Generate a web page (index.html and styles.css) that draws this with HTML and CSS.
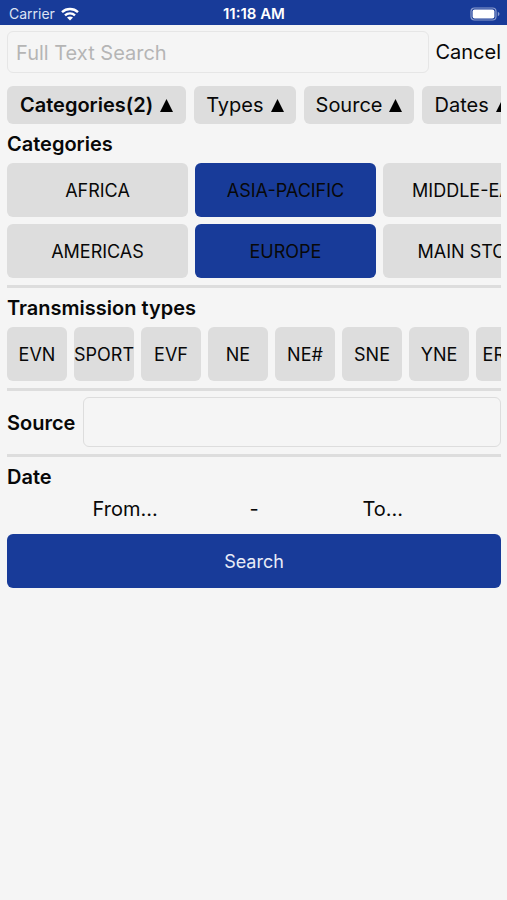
FILE: index.html
```html
<!DOCTYPE html>
<html lang="en">

<head>
    <meta charset="UTF-8">
    <meta name="viewport" content="width=device-width, initial-scale=1.0">
    <title>Search</title>
    <link rel="stylesheet" href="styles.css">
</head>

<body>
    <header class="status-bar">
        <div class="carrier">
            <span>Carrier</span>
            <svg class="wifi" viewBox="0 0 18 14" width="18" height="14">
                <path d="M1 5.2C5.5 1 12.5 1 17 5.2M4 8.3C6.8 5.7 11.2 5.7 14 8.3" fill="none" stroke="#fff" stroke-width="2.4" />
                <path d="M9 13.6L6 10.6C7.7 9.1 10.3 9.1 12 10.6Z" fill="#fff" />
            </svg>
        </div>
        <div class="time">11:18 AM</div>
        <div class="battery">
            <svg viewBox="0 0 31 14" width="31" height="14">
                <rect x="1" y="1" width="25" height="12" rx="3.5" fill="none" stroke="#8c9dcd" stroke-width="1.2" />
                <rect x="2.6" y="2.6" width="21.8" height="8.8" rx="2" fill="#fff" />
                <path d="M27.8 4.8C30 5.6 30 8.4 27.8 9.2Z" fill="#8c9dcd" />
            </svg>
        </div>
    </header>
    <main class="container">
        <form class="search-form">
            <div class="search-row">
                <input type="search" class="text-input" placeholder="Full Text Search" aria-label="Full Text Search">
                <button type="button" class="link-btn">Cancel</button>
            </div>
            <div class="tabs">
                <button type="button" class="tab active">Categories(2) <svg class="arrow" viewBox="0 0 13 13"><path d="M6.5 0L13 13H0Z" /></svg></button>
                <button type="button" class="tab">Types <svg class="arrow" viewBox="0 0 13 13"><path d="M6.5 0L13 13H0Z" /></svg></button>
                <button type="button" class="tab">Source <svg class="arrow" viewBox="0 0 13 13"><path d="M6.5 0L13 13H0Z" /></svg></button>
                <button type="button" class="tab">Dates <svg class="arrow" viewBox="0 0 13 13"><path d="M6.5 0L13 13H0Z" /></svg></button>
            </div>

            <section class="section">
                <h2>Categories</h2>
                <div class="categories">
                    <button type="button" class="chip">AFRICA</button>
                    <button type="button" class="chip selected" aria-pressed="true">ASIA-PACIFIC</button>
                    <button type="button" class="chip">MIDDLE-EAST</button>
                    <button type="button" class="chip">AMERICAS</button>
                    <button type="button" class="chip selected" aria-pressed="true">EUROPE</button>
                    <button type="button" class="chip">MAIN STORY</button>
                </div>
            </section>

            <section class="section">
                <h2>Transmission types</h2>
                <div class="types">
                    <button type="button" class="chip">EVN</button>
                    <button type="button" class="chip">SPORT</button>
                    <button type="button" class="chip">EVF</button>
                    <button type="button" class="chip">NE</button>
                    <button type="button" class="chip">NE#</button>
                    <button type="button" class="chip">SNE</button>
                    <button type="button" class="chip">YNE</button>
                    <button type="button" class="chip">ERNE</button>
                </div>
            </section>

            <section class="section source">
                <label for="source">Source</label>
                <input type="text" id="source" class="text-input">
            </section>

            <section class="date">
                <h2>Date</h2>
                <div class="date-range">
                    <button type="button" class="link-btn">From...</button>
                    <span>-</span>
                    <button type="button" class="link-btn">To...</button>
                </div>
            </section>
            <button type="submit" class="submit">Search</button>
        </form>
    </main>
</body>

</html>
```
FILE: styles.css
```css
* {
    margin: 0;
    padding: 0;
    box-sizing: border-box;
}

body {
    background-color: #f5f5f5;
    color: #080808;
    font-family: Inter, "Liberation Sans", sans-serif;
    font-size: 20px;
    line-height: 24px;
}

button,
input {
    font: inherit;
    color: inherit;
    border: none;
    background: none;
}

button {
    cursor: pointer;
    white-space: nowrap;
}

.status-bar {
    display: grid;
    grid-template-columns: 1fr auto 1fr;
    align-items: center;
    height: 25px;
    padding: 2px 6px 0 7px;
    background-color: #183b99;
    color: #fff;
    font-size: 14px;
}

.carrier {
    display: flex;
    align-items: center;
    gap: 6px;
    padding-left: 2px;
    color: #dde3f3;
}

.time {
    font-size: 15px;
    font-weight: 600;
}

.battery {
    display: flex;
    justify-content: flex-end;
}

.container {
    padding: 6px 6px 0 7px;
}

.search-row {
    display: flex;
    align-items: center;
    gap: 6px;
}

.text-input {
    flex: 1;
    min-width: 0;
    height: 50px;
    padding: 0 8px;
    border: 1px solid #ddd;
    border-radius: 6px;
}

.search-row .text-input {
    height: 42px;
    padding-top: 2px;
    border-color: #e6e6e6;
}

.text-input::placeholder {
    color: #b5b5b5;
}

.tabs,
.categories,
.types {
    overflow-x: auto;
    scrollbar-width: none;
}

.tabs {
    display: flex;
    gap: 8px;
    margin-top: 13px;
}

.tab {
    display: flex;
    flex: none;
    align-items: center;
    gap: 7px;
    height: 38px;
    padding: 0 12px;
    border-radius: 6px;
    background-color: #ddd;
}

.tab.active {
    padding: 0 13px;
    font-weight: 600;
}

.arrow {
    width: 13px;
    height: 13px;
}

.section {
    padding-bottom: 7px;
    border-bottom: 3px solid #ddd;
}

h2,
.source label {
    font-size: 20px;
    font-weight: 600;
}

h2 {
    padding: 8px 0 7px;
}

.categories {
    display: grid;
    grid-template-columns: repeat(3, 181px);
    gap: 7px;
}

.types {
    display: flex;
    gap: 7px;
}

.chip,
.submit {
    height: 54px;
    padding-top: 2px;
    border-radius: 6px;
    background-color: #ddd;
    font-size: 18px;
}

.types .chip {
    flex: none;
    width: 60px;
}

.chip.selected {
    background-color: #183b99;
}

.source {
    display: flex;
    align-items: center;
    gap: 8px;
    padding-top: 6px;
}

.source label {
    padding-top: 2px;
}

.date-range {
    display: grid;
    grid-template-columns: 1fr auto 1fr;
    align-items: center;
    gap: 6px;
    padding: 1px 0 13px;
}

.submit {
    width: 100%;
    background-color: #183b99;
    color: #e8ecf7;
}
```
